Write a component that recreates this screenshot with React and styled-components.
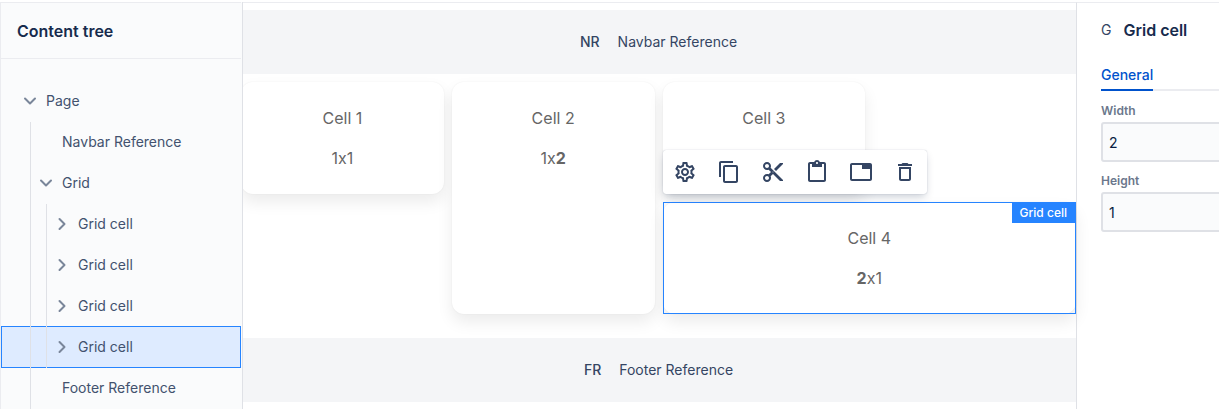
import React from "react";
import styled, { createGlobalStyle, css } from "styled-components";
import {
  MdOutlineSettings,
  MdContentCopy,
  MdContentCut,
  MdContentPaste,
  MdTab,
  MdDeleteOutline,
} from "react-icons/md";

const GlobalStyle = createGlobalStyle`
  *, *::before, *::after { box-sizing: border-box; }
  body {
    margin: 0;
    overflow: hidden;
    background: #fff;
    color: #344563;
    font: 14px/20px Inter, "Liberation Sans", sans-serif;
    font-variant-ligatures: no-contextual;
  }
  h1, h2, p, ul { margin: 0; padding: 0; }
  ul { list-style: none; }
  button, input { font: inherit; color: inherit; }
`;

const Shell = styled.div`
  display: grid;
  grid-template-columns: 241px minmax(0, 1fr) 143px;
  min-height: 100vh;
  padding-top: 2px;
`;

const Sidebar = styled.aside`
  position: relative;
  z-index: 1;
  border-top: 1px solid #ebecf0;
  border-left: 1px solid #ebecf0;
  background: #fafbfc;
  box-shadow: 1px 0 0 #fafbfc, 2px 0 0 #dfe1e6;
`;

const SidebarHeader = styled.header`
  display: flex;
  align-items: center;
  height: 56px;
  padding: 0 16px;
  border-bottom: 1px solid #ebecf0;
`;

const Title = styled.h2`
  color: #172b4d;
  font-size: 16px;
  font-weight: 600;
  line-height: 24px;
  white-space: nowrap;
`;

const Tree = styled.ul`
  margin-top: 21px;
`;

const TreeRow = styled.li`
  display: flex;
  align-items: center;
  height: 42px;
  margin-bottom: -1px;
  padding-left: 14px;
  color: #42526e;
  ${(p) =>
    p.$selected &&
    css`
      background: #deebff;
      box-shadow: inset 0 0 0 1px #2684ff;
    `}
`;

const Guide = styled.span`
  align-self: stretch;
  width: 16px;
  margin-top: 1px;
  border-right: 1px solid #dfe1e6;
`;

const Toggle = styled.button`
  display: flex;
  align-items: center;
  justify-content: center;
  width: 31px;
  height: 24px;
  padding: 0 1px 0 0;
  border: 0;
  background: none;
  color: #7a869a;
`;

const ToggleSpace = styled.span`
  width: 31px;
`;

const Canvas = styled.main`
  min-width: 0;
  padding-top: 7px;
  border-top: 1px solid #ebecf0;
`;

const Reference = styled.section`
  display: flex;
  align-items: center;
  justify-content: center;
  gap: 18px;
  height: 64px;
  background: #f4f5f7;
  color: #344563;
`;

const Initials = styled.span`
  font-weight: 500;
`;

const CellGrid = styled.div`
  display: grid;
  grid-template-columns: repeat(4, minmax(0, 1fr));
  gap: 8px;
  margin: 8px 0 24px;
`;

const Cell = styled.article`
  position: relative;
  grid-column: span ${(p) => p.$cols || 1};
  grid-row: span ${(p) => p.$rows || 1};
  display: flex;
  flex-direction: column;
  gap: 16px;
  padding: 24px;
  border-radius: 12px;
  background: #fff;
  box-shadow: 0 8px 16px rgba(0, 0, 0, 0.08), 0 0 2px rgba(0, 0, 0, 0.06);
  color: #666;
  font-size: 16px;
  line-height: 24px;
  text-align: center;
`;

const Selection = styled.div`
  position: absolute;
  inset: 0;
  border: 1px solid #2684ff;
`;

const SelectionLabel = styled.span`
  position: absolute;
  top: 0;
  right: 0;
  padding: 0 8px;
  background: #2684ff;
  color: #fff;
  font-size: 12px;
  font-weight: 500;
  line-height: 20px;
`;

const Toolbar = styled.div`
  position: absolute;
  left: 0;
  bottom: calc(100% + 8px);
  display: flex;
  border-radius: 3px;
  background: #fff;
  box-shadow: 0 4px 8px -2px rgba(9, 30, 66, 0.25), 0 0 1px rgba(9, 30, 66, 0.31);
`;

const ToolButton = styled.button`
  display: flex;
  align-items: center;
  justify-content: center;
  width: 44px;
  height: 44px;
  padding: 0;
  border: 0;
  background: none;
  color: #344563;
`;

const Panel = styled.aside`
  overflow: hidden;
  padding: 15px 0 0 24px;
  border-top: 1px solid #ebecf0;
  border-left: 1px solid #dfe1e6;
`;

const PanelBody = styled.div`
  width: 240px;
`;

const PanelHeader = styled.header`
  display: flex;
  align-items: center;
  gap: 12px;
`;

const Tabs = styled.div`
  display: flex;
  margin: 20px 0 9px;
  box-shadow: inset 0 -2px 0 #ebecf0;
`;

const Tab = styled.button`
  height: 29px;
  padding: 0 0 1px;
  border: 0;
  border-bottom: 2px solid #0052cc;
  background: none;
  color: #0052cc;
  font-weight: 500;
`;

const Field = styled.div`
  display: flex;
  flex-direction: column;
  margin-bottom: 8px;
`;

const Label = styled.label`
  padding: 3px 0;
  color: #6b778c;
  font-size: 12px;
  font-weight: 600;
  line-height: 16px;
`;

const Input = styled.input`
  height: 40px;
  padding: 0 6px;
  border: 2px solid #dfe1e6;
  border-radius: 3px;
  background: #fafbfc;
  color: #091e42;
`;

const nodes = [
  { label: "Page", depth: 0, state: "open" },
  { label: "Navbar Reference", depth: 1 },
  { label: "Grid", depth: 1, state: "open" },
  { label: "Grid cell", depth: 2, state: "closed" },
  { label: "Grid cell", depth: 2, state: "closed" },
  { label: "Grid cell", depth: 2, state: "closed" },
  { label: "Grid cell", depth: 2, state: "closed", selected: true },
  { label: "Footer Reference", depth: 1 },
];

const tools = [
  ["Settings", MdOutlineSettings],
  ["Copy", MdContentCopy],
  ["Cut", MdContentCut],
  ["Paste", MdContentPaste],
  ["Save as section", MdTab],
  ["Delete", MdDeleteOutline],
];

const Chevron = ({ open }) => (
  <svg width="16" height="16" viewBox="0 0 16 16" fill="none" stroke="currentColor" strokeWidth="2" strokeLinecap="round" strokeLinejoin="round" aria-hidden="true">
    <path d={open ? "M3 5.5 8 10.5 13 5.5" : "M5.5 3 10.5 8 5.5 13"} />
  </svg>
);

export default function App() {
  return (
    <>
      <GlobalStyle />
      <Shell>
        <Sidebar>
          <SidebarHeader>
            <Title>Content tree</Title>
          </SidebarHeader>
          <Tree>
            {nodes.map((node, i) => (
              <TreeRow key={i} $selected={node.selected}>
                {Array.from({ length: node.depth }, (_, d) => (
                  <Guide key={d} />
                ))}
                {node.state ? (
                  <Toggle aria-label={`Toggle ${node.label}`} aria-expanded={node.state === "open"}>
                    <Chevron open={node.state === "open"} />
                  </Toggle>
                ) : (
                  <ToggleSpace />
                )}
                <span>{node.label}</span>
              </TreeRow>
            ))}
          </Tree>
        </Sidebar>

        <Canvas>
          <Reference>
            <Initials>NR</Initials>
            <span>Navbar Reference</span>
          </Reference>
          <CellGrid>
            <Cell>
              <p>Cell 1</p>
              <p>1x1</p>
            </Cell>
            <Cell $rows={2}>
              <p>Cell 2</p>
              <p>1x<strong>2</strong></p>
            </Cell>
            <Cell>
              <p>Cell 3</p>
            </Cell>
            <Cell $cols={2}>
              <p>Cell 4</p>
              <p><strong>2</strong>x1</p>
              <Selection>
                <SelectionLabel>Grid cell</SelectionLabel>
              </Selection>
              <Toolbar role="toolbar" aria-label="Grid cell actions">
                {tools.map(([name, Icon]) => (
                  <ToolButton key={name} aria-label={name}>
                    <Icon size={24} />
                  </ToolButton>
                ))}
              </Toolbar>
            </Cell>
          </CellGrid>
          <Reference>
            <Initials>FR</Initials>
            <span>Footer Reference</span>
          </Reference>
        </Canvas>

        <Panel>
          <PanelBody>
            <PanelHeader>
              <span>G</span>
              <Title>Grid cell</Title>
            </PanelHeader>
            <Tabs role="tablist">
              <Tab role="tab" aria-selected="true">General</Tab>
            </Tabs>
            <Field>
              <Label htmlFor="width">Width</Label>
              <Input id="width" defaultValue="2" />
            </Field>
            <Field>
              <Label htmlFor="height">Height</Label>
              <Input id="height" defaultValue="1" />
            </Field>
          </PanelBody>
        </Panel>
      </Shell>
    </>
  );
}
